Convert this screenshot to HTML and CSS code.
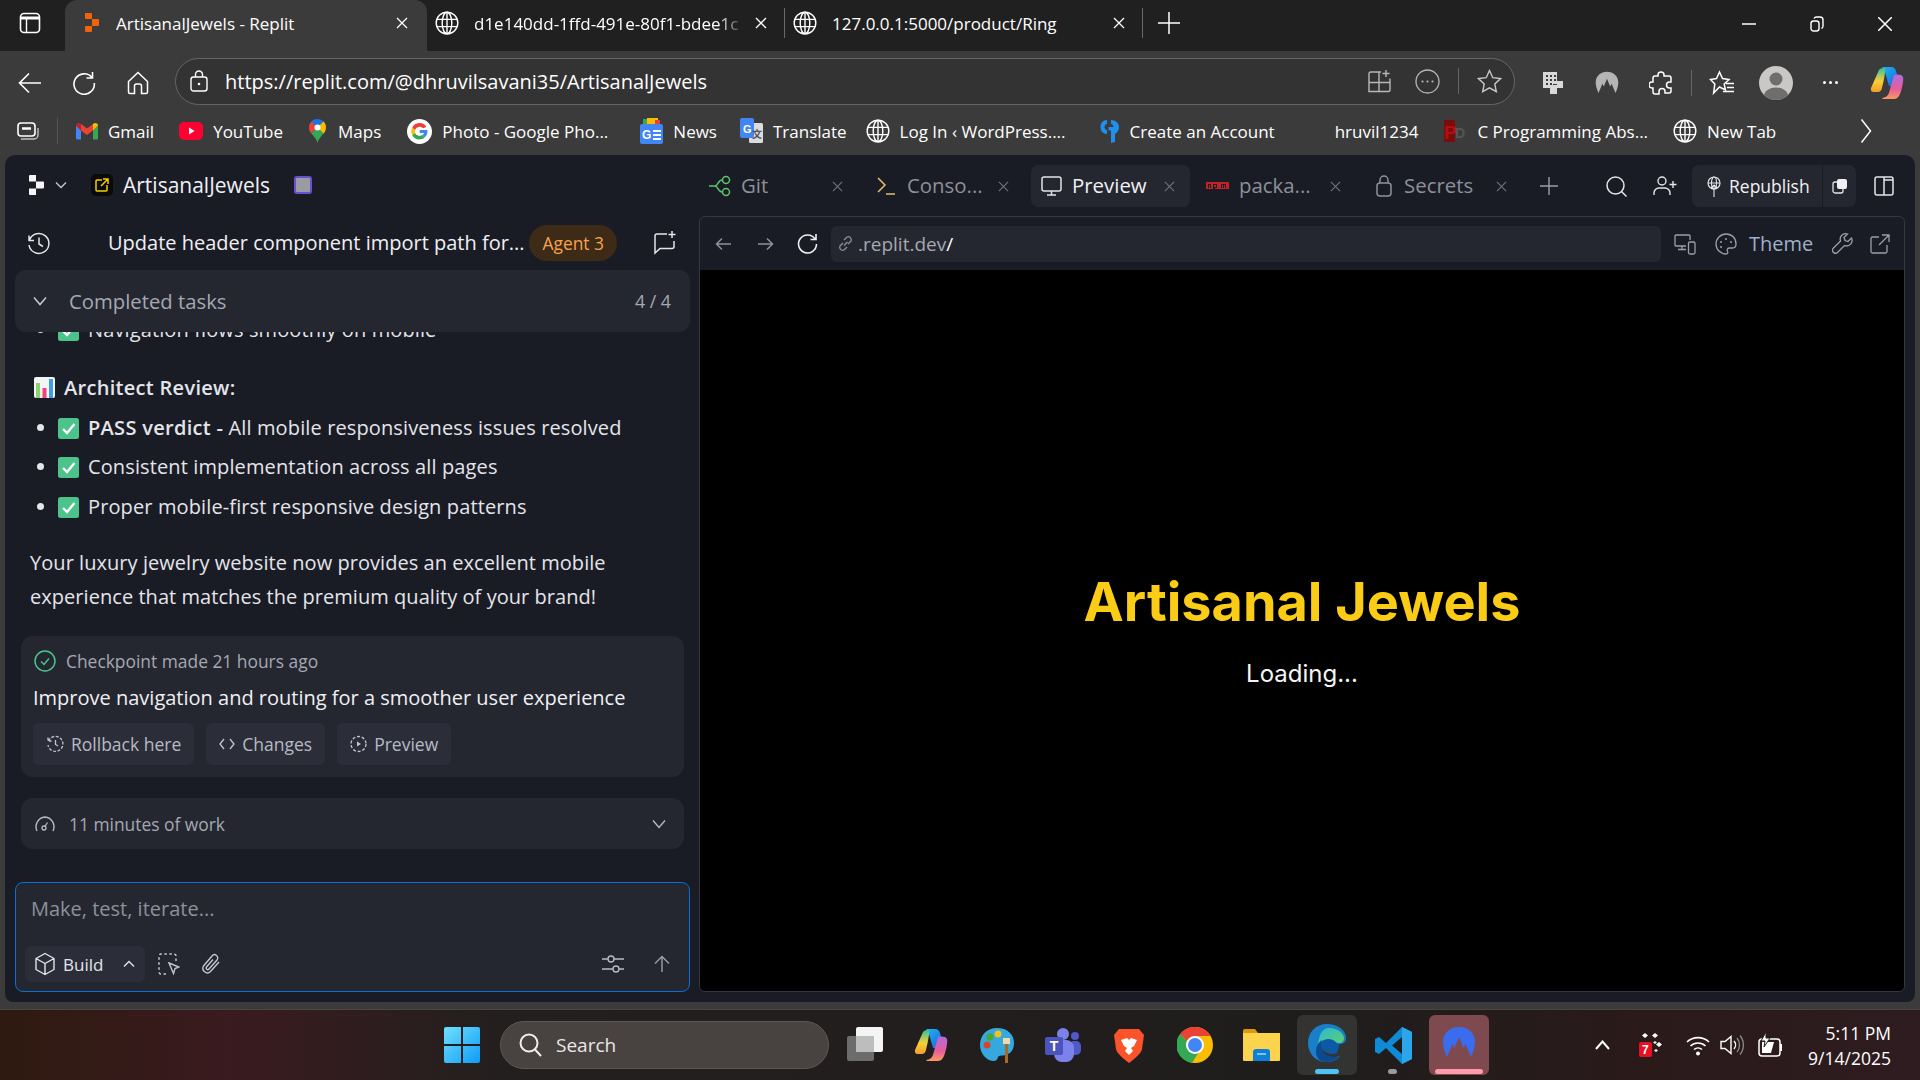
FILE: index.html
```html
<!doctype html>
<html lang="en">
<head>
	<meta charset="UTF-8">
	<title>ArtisanalJewels - Replit</title>
	<link rel="stylesheet" href="styles.css">
</head>
<body>
	<svg class="defs" width="0" height="0">
		<defs>
			<linearGradient id="copilotA" x1="0" y1="0" x2="1" y2="1">
				<stop offset="0" stop-color="#1fb6f5"/><stop offset="1" stop-color="#1a5fd8"/>
			</linearGradient>
			<linearGradient id="copilotB" x1="0" y1="0" x2="0" y2="1">
				<stop offset="0" stop-color="#35c1a0"/><stop offset=".55" stop-color="#f7d038"/><stop offset="1" stop-color="#f59b2b"/>
			</linearGradient>
			<linearGradient id="copilotC" x1="0" y1="0" x2="0" y2="1">
				<stop offset="0" stop-color="#b06be0"/><stop offset=".6" stop-color="#e85d9c"/><stop offset="1" stop-color="#fb9a5d"/>
			</linearGradient>
			<linearGradient id="winBlue" x1="0" y1="0" x2="1" y2="1">
				<stop offset="0" stop-color="#6fe0ff"/><stop offset="1" stop-color="#0f9bf5"/>
			</linearGradient>
			<linearGradient id="edgeSwirl" x1="0" y1="0" x2="1" y2="1">
				<stop offset="0" stop-color="#2bb7d6"/><stop offset="1" stop-color="#5fd36a"/>
			</linearGradient>
			<symbol id="i-globe" viewBox="0 0 24 24"><g fill="none" stroke="currentColor" stroke-width="1.4"><circle cx="12" cy="12" r="10.8"/><ellipse cx="12" cy="12" rx="4.8" ry="10.8"/><path d="M1.6 8.4h20.8M1.6 15.6h20.8M12 1.2v21.6"/></g></symbol>
			<symbol id="i-x" viewBox="0 0 12 12"><path d="M1 1l10 10M11 1L1 11" fill="none" stroke="currentColor" stroke-width="1.3"/></symbol>
			<symbol id="i-check" viewBox="0 0 21 21"><rect x="0" y="0" width="21" height="21" rx="2.5" fill="#4cc38a"/><path d="M5 11l4 4 7.5-9" fill="none" stroke="#fff" stroke-width="2.4"/></symbol>
			<symbol id="i-copilot" viewBox="0 0 34 34">
				<path d="M12 1h9c3 0 4.500 2 5.200 4.500L30 20H19L15 6c-.6-2-1.500-4-3-5z" fill="url(#copilotA)"/>
				<path d="M9 4c1.500-2 5-3 6-1 1 1.500-2 15-3 19-.6 2.500-2 4-4 4H3.500C1.500 26 .5 24.500 1 22z" fill="url(#copilotB)"/>
				<path d="M24 9c3-1 8-1 9 2 1 3-1.500 14-3 17-1 2.500-3 5-5.500 5H13c-1 0-1-1 0-1.200 3-.5 5-2 6-5z" fill="url(#copilotC)"/>
			</symbol>
			<symbol id="i-nord" viewBox="0 0 34 34"><path d="M5 31C2.500 26 1 21 1 16 1 7 8 1 17 1s16 6 16 15c0 5-1.500 10-4 15l-5.500-13-2 4L17 11l-4.500 11-2-4z" fill="currentColor"/></symbol>
		</defs>
	</svg>

	<header class="tabstrip">
		<div class="tabstrip-menu">
			<svg width="22" height="22" viewBox="0 0 22 22"><rect x="1.500" y="1.500" width="19" height="19" rx="3.500" fill="none" stroke="#fff" stroke-width="1.600"/><path d="M1.500 6h19" stroke="#fff" stroke-width="3"/><path d="M7.500 6v14" stroke="#fff" stroke-width="1.400"/></svg>
		</div>
		<div class="btab btab-on">
			<svg class="btab-fav" width="16" height="22" viewBox="0 0 16 22"><path d="M1 1h6a1 1 0 0 1 1 1v5H2a1 1 0 0 1-1-1zM8 7h6a1 1 0 0 1 1 1v5a1 1 0 0 1-1 1H8zM2 14h6v5a1 1 0 0 1-1 1H2a1 1 0 0 1-1-1v-4a1 1 0 0 1 1-1z" fill="#f26207"/></svg>
			<span class="btab-text">ArtisanalJewels - Replit</span>
			<svg class="btab-x" width="12" height="12"><use href="#i-x"/></svg>
		</div>
		<div class="btab">
			<svg class="btab-globe" width="24" height="24"><use href="#i-globe"/></svg>
			<span class="btab-text btab-fade">d1e140dd-1ffd-491e-80f1-bdee1c</span>
			<svg class="btab-x" width="12" height="12"><use href="#i-x"/></svg>
		</div>
		<i class="tab-sep"></i>
		<div class="btab">
			<svg class="btab-globe" width="24" height="24"><use href="#i-globe"/></svg>
			<span class="btab-text">127.0.0.1:5000/product/Ring</span>
			<svg class="btab-x" width="12" height="12"><use href="#i-x"/></svg>
		</div>
		<i class="tab-sep"></i>
		<svg class="tab-plus" width="22" height="22" viewBox="0 0 22 22"><path d="M11 0v22M0 11h22" stroke="#fff" stroke-width="1.500"/></svg>
		<div class="win-btns">
			<svg width="14" height="14" viewBox="0 0 14 14"><path d="M0 7h14" stroke="#fff" stroke-width="1.500"/></svg>
			<svg width="14" height="16" viewBox="0 0 14 16"><rect x="1" y="5" width="8" height="10" rx="2.500" fill="none" stroke="#fff" stroke-width="1.400"/><path d="M4 2.500C4.500 1.500 5.500 1 6.500 1H10c2 0 3 1 3 3v6c0 1-.5 2-1.500 2.500" fill="none" stroke="#fff" stroke-width="1.400"/></svg>
			<svg width="14" height="14" viewBox="0 0 14 14"><path d="M0 0l14 14M14 0L0 14" stroke="#fff" stroke-width="1.500"/></svg>
		</div>
	</header>

	<div class="toolbar">
		<div class="tool tool-first">
			<svg width="24" height="22" viewBox="0 0 24 22"><path d="M23 11H2M11 1.500L1.500 11l9.500 9.500" fill="none" stroke="#fff" stroke-width="1.600"/></svg>
		</div>
		<div class="tool">
			<svg width="24" height="24" viewBox="0 0 24 24"><path d="M20 6.500A10.200 10.200 0 1 0 22.300 12M20.500 1v6h-6" fill="none" stroke="#fff" stroke-width="1.600"/></svg>
		</div>
		<div class="tool">
			<svg width="24" height="24" viewBox="0 0 24 24"><path d="M2.500 10.500L12 1.500l9.500 9V21a1.500 1.500 0 0 1-1.500 1.500h-4.500V15a2 2 0 0 0-2-2h-3a2 2 0 0 0-2 2v7.500H4A1.500 1.500 0 0 1 2.500 21z" fill="none" stroke="#fff" stroke-width="1.500"/></svg>
		</div>
		<div class="addr">
			<svg width="18" height="22" viewBox="0 0 18 22"><rect x="1" y="7" width="16" height="14" rx="2.500" fill="none" stroke="#fff" stroke-width="1.400"/><path d="M5.500 7V4.500a3.500 3.500 0 0 1 7 0V7" fill="none" stroke="#fff" stroke-width="1.400"/><circle cx="9" cy="14" r="1.300" fill="#fff"/></svg>
			<span class="addr-url">https://replit.com/@dhruvilsavani35/ArtisanalJewels</span>
			<div class="addr-right">
				<svg class="addr-split" width="23" height="24" viewBox="0 0 23 24"><path d="M13 3H2.500A1.500 1.500 0 0 0 1 4.500v18h19.500A1.500 1.500 0 0 0 22 21V9.500M1 13.500h21M11 3v19.500M18 1v7M14.500 4.500h7" fill="none" stroke="#b8b8b8" stroke-width="1.400"/></svg>
				<svg width="25" height="25" viewBox="0 0 25 25"><circle cx="12.500" cy="12.500" r="11.500" fill="none" stroke="#b8b8b8" stroke-width="1.300"/><circle cx="7.500" cy="12.500" r="1.100" fill="#b8b8b8"/><circle cx="12.500" cy="12.500" r="1.100" fill="#b8b8b8"/><circle cx="17.500" cy="12.500" r="1.100" fill="#b8b8b8"/></svg>
				<i class="addr-sep"></i>
				<svg width="25" height="25" viewBox="0 0 25 25"><path d="M12.500 1.500l3.300 7.200 7.700.9-5.700 5.300 1.500 7.800-6.800-3.900-6.800 3.900 1.500-7.800L1.500 9.600l7.700-.9z" fill="none" stroke="#c8c8c8" stroke-width="1.400"/></svg>
			</div>
		</div>
		<div class="tool tool-ext">
			<svg width="24" height="24" viewBox="0 0 24 24"><path d="M2 1h14v9h6v7h-6v6H9v-6H2z" fill="#d8d8d8"/><path d="M5 4h2v2H5zM9 4h2v2H9zM13 4h2v2h-2zM5 8h2v2H5zM9 8h2v2H9zM13 8h2v2h-2zM5 12h2v2H5zM9 12h2v2H9z" fill="#3b3b3b"/><path d="M16 13h-4v1h4z" fill="#3b3b3b"/></svg>
		</div>
		<div class="tool">
			<svg width="24" height="24" color="#b5b5b5"><use href="#i-nord"/></svg>
		</div>
		<div class="tool">
			<svg width="24" height="25" viewBox="0 0 24 25"><path d="M9 5a3 3 0 0 1 6 0v1h5a2 2 0 0 1 2 2v4h-1.500a3 3 0 0 0 0 6H22v3a2 2 0 0 1-2 2h-4v-1.500a3 3 0 0 0-6 0V24H6a2 2 0 0 1-2-2v-4H3a3 3 0 0 1 0-6h1V8a2 2 0 0 1 2-2h3z" fill="none" stroke="#fff" stroke-width="1.500"/></svg>
		</div>
		<i class="tool-sep"></i>
		<div class="tool">
			<svg width="26" height="26" viewBox="0 0 26 26"><path d="M10.500 2l3 6.500 6.500 1-4.800 4.500 1.200 6-5.900-3-5.900 6 1.200-9L1.500 9.500l6-1z" fill="none" stroke="#fff" stroke-width="1.500"/><path d="M17 13.500h8M18 17.500h7M14 21.500h11" stroke="#fff" stroke-width="1.500"/></svg>
		</div>
		<div class="tool">
			<div class="avatar">
				<svg width="34" height="34" viewBox="0 0 34 34"><circle cx="17" cy="13" r="6.500" fill="#6e6e6e"/><ellipse cx="17" cy="30" rx="12" ry="8.500" fill="#6e6e6e"/></svg>
			</div>
		</div>
		<div class="tool tool-dots"><b></b><b></b><b></b></div>
		<div class="tool tool-last">
			<svg width="34" height="34"><use href="#i-copilot"/></svg>
		</div>
	</div>

	<nav class="bookmarks">
		<div class="bm-start">
			<svg width="22" height="20" viewBox="0 0 22 20"><rect x="1" y="2" width="17" height="13" rx="3" fill="none" stroke="#fff" stroke-width="1.600"/><path d="M5 7.500h9" stroke="#fff" stroke-width="2.500"/><path d="M4 18h13a4 4 0 0 0 4-4V7" fill="none" stroke="#c0c0c0" stroke-width="1.400"/></svg>
		</div>
		<i class="bm-sep"></i>
		<a class="bm">
			<svg width="22" height="18" viewBox="0 0 22 18"><path d="M0 3.500V16a1.500 1.500 0 0 0 1.500 1.500H5V8.500z" fill="#4285f4"/><path d="M22 3.500V16a1.500 1.500 0 0 1-1.500 1.500H17V8.500z" fill="#34a853"/><path d="M5 8.500L11 13l6-4.500V2l-6 4.500L5 2z" fill="#ea4335"/><path d="M0 3.500C0 1 3 0 5 2v6.500z" fill="#c5221f"/><path d="M22 3.500C22 1 19 0 17 2v6.500z" fill="#fbbc04"/></svg>
			<span>Gmail</span>
		</a>
		<a class="bm">
			<svg width="24" height="22" viewBox="0 0 24 22"><rect y="2" width="24" height="18" rx="5" fill="#ff0033"/><path d="M10 7.500l5.500 3.500-5.500 3.500z" fill="#fff"/></svg>
			<span>YouTube</span>
		</a>
		<a class="bm bm-maps">
			<svg width="17" height="24" viewBox="0 0 17 24"><path d="M8.500 0A8.500 8.500 0 0 0 2.400 14.400L14.600 2.500A8.500 8.500 0 0 0 8.500 0z" fill="#1a73e8"/><path d="M2.400 2.500A8.500 8.500 0 0 0 0 8.500c0 2.300.9 4.300 2.400 5.900l6-6z" fill="#ea4335"/><path d="M14.600 2.500l-12.200 12C5 17.500 7.500 20 8.500 24c1-4 3.500-6.500 6.100-9.500z" fill="#34a853"/><path d="M14.600 2.500L8.500 8.500l6.100 6c1.500-1.600 2.400-3.700 2.400-6s-.9-4.400-2.400-6z" fill="#fbbc04"/><circle cx="8.500" cy="8.500" r="3" fill="#fff"/></svg>
			<span>Maps</span>
		</a>
		<a class="bm bm-photo">
			<svg width="25" height="25" viewBox="0 0 25 25"><circle cx="12.500" cy="12.500" r="12.500" fill="#fff"/><path d="M19.500 8A8 8 0 0 0 5.200 8.800l2.900 2.300A4.700 4.700 0 0 1 16 9.200z" fill="#ea4335"/><path d="M5.200 8.800a8 8 0 0 0 0 7.400l2.900-2.300a4.700 4.700 0 0 1 0-2.800z" fill="#fbbc04"/><path d="M5.200 16.200a8 8 0 0 0 12.700 2l-2.800-2.200a4.700 4.700 0 0 1-7-2.100z" fill="#34a853"/><path d="M20.300 11h-7.600v3.100h4.500a3.800 3.800 0 0 1-2.100 1.900l2.800 2.200c2-1.800 3-4.500 2.400-7.200z" fill="#4285f4"/></svg>
			<span>Photo - Google Pho...</span>
		</a>
		<a class="bm bm-news">
			<svg width="23" height="26" viewBox="0 0 23 26"><path d="M3 1h12v6H3z" fill="#34a853"/><path d="M7 0h11v7H7z" fill="#fbbc04"/><path d="M15 2h5v6h-5z" fill="#ea4335"/><rect y="6" width="23" height="20" rx="2" fill="#4285f4"/><text class="bm-glyph" x="2" y="21" font-size="12">G</text><path d="M13 12h8v2h-8zM13 16h8v2h-8zM13 20h8v2h-8z" fill="#fff"/></svg>
			<span>News</span>
		</a>
		<a class="bm bm-translate">
			<svg width="23" height="26" viewBox="0 0 23 26"><rect x="9" y="5" width="14" height="20" rx="1.500" fill="#dadce0"/><rect width="14" height="20" rx="2" fill="#4285f4"/><text class="bm-glyph" x="3" y="15" font-size="11">G</text><text class="bm-glyph bm-glyph-dark" x="12" y="20" font-size="10">文</text></svg>
			<span>Translate</span>
		</a>
		<a class="bm bm-login">
			<svg width="24" height="24"><use href="#i-globe"/></svg>
			<span>Log In ‹ WordPress....</span>
		</a>
		<a class="bm bm-account">
			<svg width="21" height="26" viewBox="0 0 21 26"><path d="M8 2C4 2 1.500 5 1.500 9s2.500 7 6.500 7V12C6.500 12 5.500 10.500 5.500 9S6.500 6 8 6zM12 2v4c1.500 0 2.500 1.500 2.500 3h-5v3.500H12V25l4-1v-8c2.500-1.500 4-4 4-7 0-4-3.500-7-8-7z" fill="#1e90f0"/></svg>
			<span>Create an Account</span>
		</a>
		<a class="bm bm-plain"><span>hruvil1234</span></a>
		<a class="bm">
			<svg width="24" height="24" viewBox="0 0 24 24"><rect x="1" y="1" width="11" height="22" fill="#7a0c0c"/><rect x="12" y="3" width="11" height="20" fill="#3c3c3c"/><text class="bm-glyph bm-glyph-p" x="1" y="20" font-size="19">P</text><text class="bm-glyph bm-glyph-d" x="12" y="19" font-size="14">D</text></svg>
			<span>C Programming Abs...</span>
		</a>
		<a class="bm">
			<svg width="24" height="24"><use href="#i-globe"/></svg>
			<span>New Tab</span>
		</a>
		<svg class="bm-more" width="12" height="26" viewBox="0 0 12 26"><path d="M1.500 1.500L10.500 13 1.500 24.500" fill="none" stroke="#fff" stroke-width="1.500"/></svg>
	</nav>

	<main class="app">
		<section class="side">
			<div class="side-head">
				<svg class="replit-logo" width="15" height="20" viewBox="0 0 15 20"><path d="M0 1a1 1 0 0 1 1-1h6v6.500H0zM7 6.500h7a1 1 0 0 1 1 1v5a1 1 0 0 1-1 1H7zM0 13.500h7V20H1a1 1 0 0 1-1-1z" fill="#f5f5f5"/></svg>
				<svg class="head-chev" width="12" height="8" viewBox="0 0 12 8"><path d="M1 1.500l5 5 5-5" fill="none" stroke="#c8cad0" stroke-width="1.300"/></svg>
				<div class="proj-tile">
					<svg width="14" height="14" viewBox="0 0 14 14"><path d="M7 2H2a1 1 0 0 0-1 1v9a1 1 0 0 0 1 1h9a1 1 0 0 0 1-1V7M8 1h5v5M13 1L6 8" fill="none" stroke="#f5d000" stroke-width="1.500"/></svg>
				</div>
				<span class="proj-name">ArtisanalJewels</span>
				<div class="proj-chip"><i></i></div>
			</div>
			<div class="side-title">
				<svg width="24" height="24" viewBox="0 0 24 24"><path d="M3 4.500v5h5M3.500 9a10 10 0 1 1-.5 5" fill="none" stroke="#e4e5ea" stroke-width="1.500"/><path d="M13 6.500V13l4 2.500" fill="none" stroke="#e4e5ea" stroke-width="1.500"/></svg>
				<span class="title-text">Update header component import path for...</span>
				<span class="agent-badge">Agent 3</span>
				<svg class="title-new" width="22" height="24" viewBox="0 0 22 24"><path d="M13 3H3a2 2 0 0 0-2 2v17l5-4.500h12a2 2 0 0 0 2-2V10" fill="none" stroke="#e4e5ea" stroke-width="1.500"/><path d="M18 0v7M14.500 3.500h7" stroke="#e4e5ea" stroke-width="1.500"/></svg>
			</div>
			<div class="tasks-bar">
				<svg width="16" height="10" viewBox="0 0 16 10"><path d="M2 1.500l6 7 6-7" fill="none" stroke="#c8cad0" stroke-width="1.500"/></svg>
				<span class="tasks-label">Completed tasks</span>
				<span class="tasks-count">4 / 4</span>
			</div>
			<div class="chat">
				<ul class="chat-list chat-list-top">
					<li><svg width="21" height="21"><use href="#i-check"/></svg><span>Navigation flows smoothly on mobile</span></li>
				</ul>
				<p class="chat-head">
					<svg width="21" height="21" viewBox="0 0 21 21"><rect width="21" height="21" rx="2" fill="#f4f4f6"/><rect x="2" y="6" width="4" height="15" fill="#8bd36a"/><rect x="8.500" y="11" width="4" height="10" fill="#f0447c"/><rect x="15" y="2" width="4" height="19" fill="#3f9de8"/></svg>
					<b>Architect Review:</b>
				</p>
				<ul class="chat-list">
					<li><svg width="21" height="21"><use href="#i-check"/></svg><span><b>PASS verdict -</b> All mobile responsiveness issues resolved</span></li>
					<li><svg width="21" height="21"><use href="#i-check"/></svg><span>Consistent implementation across all pages</span></li>
					<li><svg width="21" height="21"><use href="#i-check"/></svg><span>Proper mobile-first responsive design patterns</span></li>
				</ul>
				<p class="chat-para">Your luxury jewelry website now provides an excellent mobile experience that matches the premium quality of your brand!</p>
				<div class="card checkpoint">
					<div class="cp-top">
						<svg width="22" height="22" viewBox="0 0 22 22"><circle cx="11" cy="11" r="10" fill="none" stroke="#4cc38a" stroke-width="1.500"/><path d="M7 11.500l3 3 5-6" fill="none" stroke="#4cc38a" stroke-width="1.500"/></svg>
						<span>Checkpoint made 21 hours ago</span>
					</div>
					<div class="cp-msg">Improve navigation and routing for a smoother user experience</div>
					<div class="cp-btns">
						<a class="cp-btn">
							<svg width="18" height="18" viewBox="0 0 18 18"><path d="M2 2.500V6h3.500M2.500 6A7.500 7.500 0 1 1 2 10" fill="none" stroke="#c4c6ce" stroke-width="1.300" stroke-dasharray="3 1.500"/><path d="M9.500 5v4.500l2.500 1.500" fill="none" stroke="#c4c6ce" stroke-width="1.300"/></svg>
							<span>Rollback here</span>
						</a>
						<a class="cp-btn">
							<svg width="16" height="14" viewBox="0 0 16 14"><path d="M5 2L1 7l4 5M11 2l4 5-4 5" fill="none" stroke="#c4c6ce" stroke-width="1.300"/></svg>
							<span>Changes</span>
						</a>
						<a class="cp-btn">
							<svg width="17" height="18" viewBox="0 0 17 18"><circle cx="8.500" cy="9" r="7.500" fill="none" stroke="#c4c6ce" stroke-width="1.300" stroke-dasharray="3 1.800"/><path d="M7 6.500l4 2.500-4 2.500z" fill="#c4c6ce"/></svg>
							<span>Preview</span>
						</a>
					</div>
				</div>
				<div class="card work">
					<svg width="22" height="18" viewBox="0 0 22 18"><path d="M3 16A9.800 9.800 0 0 1 11 2a9.800 9.800 0 0 1 8 14" fill="none" stroke="#b8bac3" stroke-width="1.400"/><circle cx="10" cy="13" r="2" fill="none" stroke="#b8bac3" stroke-width="1.300"/><path d="M11 11.500l2.500-4" stroke="#b8bac3" stroke-width="1.300"/></svg>
					<span>11 minutes of work</span>
					<svg class="work-chev" width="16" height="10" viewBox="0 0 16 10"><path d="M2 1.500l6 7 6-7" fill="none" stroke="#b8bac3" stroke-width="1.400"/></svg>
				</div>
			</div>
			<div class="composer">
				<div class="composer-ph">Make, test, iterate...</div>
				<div class="composer-row">
					<a class="build-btn">
						<svg width="22" height="24" viewBox="0 0 22 24"><path d="M11 1.500l9 5v11l-9 5-9-5v-11zM2 6.500l9 5 9-5M11 11.500v11" fill="none" stroke="#e4e5ea" stroke-width="1.400" stroke-linejoin="round"/></svg>
						<span>Build</span>
						<svg class="build-chev" width="12" height="8" viewBox="0 0 12 8"><path d="M1 6.500l5-5 5 5" fill="none" stroke="#e4e5ea" stroke-width="1.300"/></svg>
					</a>
					<svg class="comp-ico" width="22" height="22" viewBox="0 0 22 22"><path d="M8 21H3a2 2 0 0 1-2-2V3a2 2 0 0 1 2-2h13a2 2 0 0 1 2 2v6" fill="none" stroke="#c4c6ce" stroke-width="1.500" stroke-dasharray="2.500 2.500"/><path d="M11 10l10 4-4 1.500-1.500 5z" fill="none" stroke="#c4c6ce" stroke-width="1.400"/></svg>
					<svg class="comp-ico" width="22" height="24" viewBox="0 0 22 24"><path d="M19 10l-8.500 9.500a4.500 4.500 0 0 1-7-5.500L12 4a3.200 3.200 0 0 1 5 4l-8 9a1.500 1.500 0 0 1-2.500-2l6.500-7.500" fill="none" stroke="#c4c6ce" stroke-width="1.400"/></svg>
					<svg class="comp-ico comp-right" width="22" height="18" viewBox="0 0 22 18"><path d="M0 4h6M12 4h10M0 14h11M17 14h5" stroke="#b8bac3" stroke-width="1.400"/><circle cx="9" cy="4" r="3" fill="none" stroke="#b8bac3" stroke-width="1.400"/><circle cx="14" cy="14" r="3" fill="none" stroke="#b8bac3" stroke-width="1.400"/></svg>
					<svg class="comp-ico comp-send" width="16" height="18" viewBox="0 0 16 18"><path d="M8 17V1.500M1 8.500l7-7 7 7" fill="none" stroke="#9c9ea8" stroke-width="1.400"/></svg>
				</div>
			</div>
		</section>

		<section class="work-area">
			<div class="wtabs">
				<div class="wtab wtab-git">
					<svg width="22" height="22" viewBox="0 0 22 22"><path d="M0 11h6M6 11c3 0 3-6 7-6M6 11c3 0 3 6 7 6" fill="none" stroke="#5ec26a" stroke-width="1.500"/><circle cx="17" cy="5" r="3.500" fill="none" stroke="#5ec26a" stroke-width="1.500"/><circle cx="17" cy="17" r="3.500" fill="none" stroke="#5ec26a" stroke-width="1.500"/></svg>
					<span>Git</span>
					<svg class="wtab-x" width="11" height="11"><use href="#i-x"/></svg>
				</div>
				<div class="wtab wtab-console">
					<svg width="18" height="20" viewBox="0 0 18 20"><path d="M1 2l7 7-7 7" fill="none" stroke="#e0c16a" stroke-width="1.500"/><path d="M9 18h9" stroke="#e0c16a" stroke-width="1.500"/></svg>
					<span>Conso...</span>
					<svg class="wtab-x" width="11" height="11"><use href="#i-x"/></svg>
				</div>
				<div class="wtab wtab-on">
					<svg width="21" height="20" viewBox="0 0 21 20"><rect x="1" y="1" width="19" height="14" rx="2" fill="none" stroke="#e4e5ea" stroke-width="1.500"/><path d="M10.500 15v4M6 19h9" stroke="#e4e5ea" stroke-width="1.500"/></svg>
					<span>Preview</span>
					<svg class="wtab-x" width="11" height="11"><use href="#i-x"/></svg>
				</div>
				<div class="wtab wtab-npm">
					<svg width="23" height="9" viewBox="0 0 23 9"><rect width="23" height="7" fill="#c12127"/><path d="M2 2h3v4H4V3H3v3H2zM7 2h4v4H9v1H7zM8 3v2h2V3zM12 2h8v4h-1V3h-1v3h-1V3h-1v3h-1V2z" fill="#1a1c25"/></svg>
					<span>packa...</span>
					<svg class="wtab-x" width="11" height="11"><use href="#i-x"/></svg>
				</div>
				<div class="wtab wtab-secrets">
					<svg width="16" height="22" viewBox="0 0 16 22"><rect x="1" y="8" width="14" height="13" rx="3" fill="none" stroke="#8e909a" stroke-width="1.500"/><path d="M4 8V5a4 4 0 0 1 8 0v3" fill="none" stroke="#8e909a" stroke-width="1.500"/></svg>
					<span>Secrets</span>
					<svg class="wtab-x" width="11" height="11"><use href="#i-x"/></svg>
				</div>
				<svg class="wtab-plus" width="18" height="18" viewBox="0 0 18 18"><path d="M9 0v18M0 9h18" stroke="#9c9ea8" stroke-width="1.400"/></svg>
				<div class="wtabs-right">
					<svg width="21" height="21" viewBox="0 0 21 21"><circle cx="9.500" cy="9.500" r="8.500" fill="none" stroke="#e4e5ea" stroke-width="1.500"/><path d="M15.500 15.500l5 5" stroke="#e4e5ea" stroke-width="1.500"/></svg>
					<svg class="invite-ico" width="24" height="20" viewBox="0 0 24 20"><circle cx="9" cy="5" r="4" fill="none" stroke="#e4e5ea" stroke-width="1.400"/><path d="M1 19v-2a5 5 0 0 1 5-5h6a5 5 0 0 1 5 5v2" fill="none" stroke="#e4e5ea" stroke-width="1.400"/><path d="M20 5v7M16.500 8.500h7" stroke="#e4e5ea" stroke-width="1.400"/></svg>
					<div class="publish">
						<a class="publish-main">
							<svg width="14" height="21" viewBox="0 0 14 21"><circle cx="7" cy="7" r="6" fill="none" stroke="#e4e5ea" stroke-width="1.200"/><ellipse cx="7" cy="7" rx="2.500" ry="6" fill="none" stroke="#e4e5ea" stroke-width="1.100"/><path d="M1 7h12M7 9v12M4 12l3-3 3 3" fill="none" stroke="#e4e5ea" stroke-width="1.100"/></svg>
							<span>Republish</span>
						</a>
						<a class="publish-side">
							<svg width="15" height="15" viewBox="0 0 15 15"><rect x="1" y="3" width="10" height="11" rx="2" fill="none" stroke="#e4e5ea" stroke-width="1.300"/><rect x="5" y="0" width="10" height="10" rx="2" fill="#f0f0f4"/></svg>
						</a>
					</div>
					<svg class="panel-ico" width="20" height="20" viewBox="0 0 20 20"><rect x="1" y="1" width="18" height="18" rx="2" fill="none" stroke="#e4e5ea" stroke-width="1.500"/><path d="M10 1v18M10 4h9" stroke="#e4e5ea" stroke-width="1.500"/></svg>
				</div>
			</div>
			<div class="pane">
				<div class="pane-bar">
					<svg class="pane-nav" width="17" height="14" viewBox="0 0 17 14"><path d="M16 7H1.500M7 1.500L1.500 7 7 12.500" fill="none" stroke="#8e909a" stroke-width="1.500"/></svg>
					<svg class="pane-nav pane-fwd" width="17" height="14" viewBox="0 0 17 14"><path d="M1 7h14.500M10 1.500L15.500 7 10 12.500" fill="none" stroke="#8e909a" stroke-width="1.500"/></svg>
					<svg class="pane-nav pane-reload" width="22" height="22" viewBox="0 0 22 22"><path d="M19 6a9 9 0 1 0 1.500 5M20 1v5.500h-5.500" fill="none" stroke="#f0f0f4" stroke-width="1.600"/></svg>
					<div class="pane-url">
						<svg width="17" height="17" viewBox="0 0 17 17"><path d="M7 10.500l3.500-3.500M6 8l-3 3a3 3 0 0 0 4 4l3-3M11 9l3-3a3 3 0 0 0-4-4L7 5" fill="none" stroke="#8e909a" stroke-width="1.300"/></svg>
						<span class="pane-host">.replit.dev<em>/</em></span>
					</div>
					<svg class="pane-ico pane-devices" width="22" height="22" viewBox="0 0 22 22"><path d="M12 13H2a1 1 0 0 1-1-1V3a1 1 0 0 1 1-1h13a1 1 0 0 1 1 1v4M8 13v3M4 16.500h8" fill="none" stroke="#9c9ea8" stroke-width="1.300"/><rect x="14.500" y="9" width="6.500" height="12" rx="1.500" fill="none" stroke="#9c9ea8" stroke-width="1.300"/></svg>
					<svg class="pane-ico" width="22" height="22" viewBox="0 0 22 22"><path d="M11 1a10 10 0 1 0 0 20c2 0 2-1.500 1.500-2.500-1-2 0-3.500 2-3.500h3c2 0 3.500-1.500 3.500-4C21 5 17 1 11 1z" fill="none" stroke="#9c9ea8" stroke-width="1.300"/><circle cx="6" cy="9" r="1" fill="#9c9ea8"/><circle cx="11" cy="6" r="1" fill="#9c9ea8"/><circle cx="16" cy="9" r="1" fill="#9c9ea8"/><circle cx="6" cy="14" r="1" fill="#9c9ea8"/></svg>
					<span class="pane-theme">Theme</span>
					<svg class="pane-ico" width="21" height="21" viewBox="0 0 21 21"><path d="M19.500 5l-3.500 3.500-3-1-1-3L15.500 1a5.500 5.500 0 0 0-7 7L1.500 15a3 3 0 0 0 4 4.500l7-7a5.500 5.500 0 0 0 7-7.500z" fill="none" stroke="#9c9ea8" stroke-width="1.300"/></svg>
					<svg class="pane-ico pane-open" width="20" height="20" viewBox="0 0 20 20"><path d="M9 3H2.500A1.500 1.500 0 0 0 1 4.500v13A1.500 1.500 0 0 0 2.500 19h13a1.500 1.500 0 0 0 1.500-1.500V11M12 1h7v7M19 1L9 11" fill="none" stroke="#9c9ea8" stroke-width="1.300"/></svg>
				</div>
				<div class="preview">
					<h1>Artisanal Jewels</h1>
					<p>Loading...</p>
				</div>
			</div>
		</section>
	</main>
	<div class="app-foot"></div>

	<footer class="taskbar">
		<svg class="tb-win" width="36" height="36" viewBox="0 0 36 36"><path d="M0 2a2 2 0 0 1 2-2h15v17H0zM19 0h15a2 2 0 0 1 2 2v15H19zM0 19h17v17H2a2 2 0 0 1-2-2zM19 19h17v15a2 2 0 0 1-2 2H19z" fill="url(#winBlue)"/></svg>
		<div class="tb-search">
			<svg width="23" height="24" viewBox="0 0 23 24"><circle cx="10" cy="10" r="8.500" fill="none" stroke="#eee" stroke-width="2"/><path d="M16 16.500l6 6.500" stroke="#eee" stroke-width="2"/></svg>
			<span>Search</span>
		</div>
		<div class="tb-apps">
			<div class="tb-app">
				<svg width="36" height="36" viewBox="0 0 36 36"><rect x="0" y="9" width="27" height="25" rx="2" fill="#6c6c6c"/><rect x="9" y="0" width="27" height="25" rx="2" fill="#f4f4f4"/><rect x="9" y="9" width="18" height="16" fill="#bdbdbd"/></svg>
			</div>
			<div class="tb-app">
				<svg width="34" height="34"><use href="#i-copilot"/></svg>
			</div>
			<div class="tb-app">
				<svg width="34" height="36" viewBox="0 0 34 36"><path d="M17 1C7 1 0 8 0 18c0 8 6 16 14 16 4 0 3-4 5-5 3-1 6 0 9-2 4-2 6-6 6-11C34 7 27 1 17 1z" fill="#35a8e0"/><circle cx="7" cy="18" r="3.500" fill="#d8442a"/><circle cx="10" cy="10" r="3.500" fill="#4ba82e"/><circle cx="18" cy="7" r="3.500" fill="#f2c21a"/><rect x="23" y="11" width="7" height="6" fill="#efd9b0"/><rect x="25" y="17" width="3" height="19" fill="#a56a2a"/></svg>
			</div>
			<div class="tb-app">
				<svg width="36" height="36" viewBox="0 0 36 36"><circle cx="18" cy="7" r="6" fill="#7b83eb"/><circle cx="30" cy="9" r="4" fill="#5059c9"/><rect x="24" y="14" width="12" height="14" rx="5" fill="#5059c9"/><rect x="9" y="13" width="20" height="22" rx="8" fill="#7b83eb"/><rect y="10" width="18" height="18" rx="2" fill="#4b53bc"/><text class="tb-t" x="9" y="24" font-size="14">T</text></svg>
			</div>
			<div class="tb-app">
				<svg width="32" height="36" viewBox="0 0 32 36"><path d="M6 2h20l5 6-2 14c-1 5-9 11-13 14C12 33 4 27 3 22L1 8z" fill="#fb542b"/><path d="M8 13l6-2 2 2 2-2 6 2-3 6-3 2 2 3-4 4-4-4 2-3-3-2z" fill="#fff"/></svg>
			</div>
			<div class="tb-app">
				<svg width="36" height="36" viewBox="0 0 36 36"><circle cx="18" cy="18" r="18" fill="#fbbc04"/><path d="M18 0a18 18 0 0 1 15.600 9H18a9 9 0 0 0-8 5L3 7a18 18 0 0 1 15-7z" fill="#ea4335"/><path d="M3 7a18 18 0 0 0 12 28.800L22 25a9 9 0 0 1-12-11z" fill="#34a853"/><circle cx="18" cy="18" r="9" fill="#fff"/><circle cx="18" cy="18" r="7" fill="#4285f4"/></svg>
			</div>
			<div class="tb-app">
				<svg width="37" height="32" viewBox="0 0 37 32"><path d="M0 2a2 2 0 0 1 2-2h10l3 4h-15z" fill="#d99a0f"/><path d="M0 4h37v27a1 1 0 0 1-1 1H1a1 1 0 0 1-1-1z" fill="#fbd34d"/><path d="M10 32v-9a3 3 0 0 1 3-3h11a3 3 0 0 1 3 3v9z" fill="#0f80d8"/><path d="M14 24h9v2h-9z" fill="#7cc3f2"/></svg>
			</div>
			<div class="tb-app tb-slot tb-slot-edge">
				<svg width="38" height="38" viewBox="0 0 38 38"><path d="M13 22c0-4 3-8 8-8 5 0 7 3 11 4-1 4-2 9-3 11-5 3-16-1-16-7z" fill="#0c5aa6"/><path d="M19 0C8 0 0 8 0 19c0 11 8 19 18 19 6 0 11-2 14-6-8 3-19 0-19-10 0-4 3-7 8-7 6 0 6 5 11 5 4 0 6-3 6-6C38 6 29 0 19 0z" fill="#1a7fc9"/><path d="M21 4c9 0 15 6 15 10 0 3-2 5-5 5-4 0-4-4-10-4-5 0-9 2-11 6C11 11 14 4 21 4z" fill="url(#edgeSwirl)"/><path d="M13 22c0 8 9 13 19 10-4 4-9 6-14 6-6 0-10-4-10-10 0-6 3-10 6-12-1 2-1 4-1 6z" fill="#0b4a8f"/></svg>
				<i class="tb-mark tb-mark-edge"></i>
			</div>
			<div class="tb-app tb-code">
				<svg width="37" height="37" viewBox="0 0 37 37"><path d="M27 0l10 5v27l-10 5L11 21l-7 6-4-2V12l4-2 7 6zM27 10l-10 8.500 10 8.500z" fill="#0f8ad6"/><path d="M27 0l10 5v27l-10 5z" fill="#2ba6ea"/></svg>
				<i class="tb-dot"></i>
			</div>
			<div class="tb-app tb-slot tb-slot-nord">
				<svg width="34" height="34" color="#3a6cf0"><use href="#i-nord"/></svg>
				<i class="tb-mark tb-mark-nord"></i>
			</div>
		</div>
		<div class="tray">
			<svg class="tray-caret" width="15" height="10" viewBox="0 0 15 10"><path d="M1 9l6.500-7.500L14 9" fill="none" stroke="#fff" stroke-width="2"/></svg>
			<svg class="tray-badge" width="24" height="24" viewBox="0 0 24 24"><path d="M6 0l3 2.500L6 5 3 2.500zM16 0l3 2.500L16 5l-3-2.500zM20 9l3 2.500L20 14l-3-2.500z" fill="#fff"/><path d="M16 8l2 1.500L16 11l-2-1.500zM17 16l2 1.500L17 19l-2-1.500z" fill="#eee"/><rect y="9" width="13" height="15" rx="2" fill="#e81123"/><text class="tray-seven" x="3" y="21" font-size="12">7</text></svg>
			<svg class="tray-wifi" width="24" height="22" viewBox="0 0 24 22"><path d="M1 8a16 16 0 0 1 22 0M4.500 12a11 11 0 0 1 15 0M8 15.500a6 6 0 0 1 8 0" fill="none" stroke="#fff" stroke-width="1.600"/><circle cx="12" cy="19.500" r="2" fill="#fff"/></svg>
			<svg class="tray-vol" width="25" height="22" viewBox="0 0 25 22"><path d="M1 7.500h4l6-5v17l-6-5H1z" fill="none" stroke="#fff" stroke-width="1.400"/><path d="M14 7a6 6 0 0 1 0 8" fill="none" stroke="#fff" stroke-width="1.400"/><path d="M17 4a11 11 0 0 1 0 14M20 1.500a15 15 0 0 1 0 19" fill="none" stroke="#8a8a8a" stroke-width="1.300"/></svg>
			<svg class="tray-bat" width="25" height="26" viewBox="0 0 25 26"><rect x="1" y="7" width="21" height="17" rx="3" fill="none" stroke="#fff" stroke-width="1.500"/><path d="M23 12v7" stroke="#fff" stroke-width="2"/><path d="M4 10h12l-3 11H4z" fill="#fff"/><path d="M8 0L3 9h4l-1 6 6-9H8z" fill="#fff" stroke="#231f1e"/></svg>
			<div class="clock"><span>5:11 PM</span><span>9/14/2025</span></div>
		</div>
	</footer>
</body>
</html>
```
FILE: styles.css
```css
* {
	margin: 0;
	padding: 0;
	box-sizing: border-box;
}

html, body {
	width: 1920px;
	height: 1080px;
	overflow: hidden;
}

body {
	display: flex;
	flex-direction: column;
	background: #3b3b3b;
	color: #fff;
	font-family: "Open Sans", "Noto Sans", sans-serif;
}

.defs {
	display: block;
	flex: none;
}

svg {
	flex: none;
	display: block;
}

/* browser tabs */
.tabstrip {
	display: flex;
	align-items: center;
	height: 51px;
	background: #202020;
	font-size: 17px;
}

.tabstrip-menu {
	display: flex;
	justify-content: center;
	width: 65px;
	padding: 0 5px 5px 0;
}

.btab {
	display: flex;
	align-items: center;
	width: 357px;
	height: 51px;
	padding: 0 17px 5px 8px;
}

.btab-on {
	width: 362px;
	padding: 0 19px 5px;
	background: #3b3b3b;
	border-radius: 12px 12px 0 0;
}

.btab-fav {
	margin-right: 16px;
}

.btab-globe {
	margin-right: 15px;
}

.btab-text {
	flex: 1;
	white-space: nowrap;
	overflow: hidden;
}

.btab-fade {
	margin-right: 10px;
	-webkit-mask-image: linear-gradient(90deg, #000 90%, transparent);
	mask-image: linear-gradient(90deg, #000 90%, transparent);
}

.tab-sep {
	width: 1px;
	height: 30px;
	margin-bottom: 5px;
	background: #6a6a6a;
}

.tab-plus {
	margin-left: 15px;
	margin-bottom: 5px;
}

.win-btns {
	display: flex;
	align-items: center;
	gap: 54px;
	margin-left: auto;
	padding-right: 28px;
	padding-bottom: 3px;
}

/* address row */
.toolbar {
	display: flex;
	align-items: center;
	height: 63px;
	padding-left: 3px;
}

.tool {
	display: flex;
	align-items: center;
	justify-content: center;
	width: 54px;
}

.addr {
	display: flex;
	align-items: center;
	width: 1340px;
	height: 47px;
	margin-left: 10px;
	margin-bottom: 3px;
	padding: 0 12px 0 14px;
	background: #333;
	border: 1.500px solid #666;
	border-radius: 24px;
}

.addr-url {
	margin-left: 17px;
	font-size: 20px;
}

.addr-right {
	display: flex;
	align-items: center;
	gap: 18px;
	margin-left: auto;
}

.addr-split {
	margin-right: 6px;
}

.addr-sep {
	width: 1px;
	height: 26px;
	background: #666;
}

.tool-ext {
	margin-left: 11px;
}

.tool-sep {
	width: 1px;
	height: 26px;
	margin: 0 3px;
	background: #666;
}

.avatar {
	width: 34px;
	height: 34px;
	border-radius: 50%;
	background: #c9c8c4;
	overflow: hidden;
}

.tool-dots {
	gap: 3px;
}

.tool-dots b {
	width: 3px;
	height: 3px;
	border-radius: 50%;
	background: #fff;
}

.tool-last {
	margin-left: 3px;
}

/* bookmarks */
.bookmarks {
	display: flex;
	align-items: center;
	gap: 25px;
	height: 41px;
	padding-left: 17px;
	padding-bottom: 7px;
	font-size: 17px;
}

.bm-start {
	margin-right: -7px;
}

.bm-sep {
	width: 1px;
	height: 26px;
	margin-right: -7px;
	background: #555;
}

.bm {
	display: flex;
	align-items: center;
	gap: 10px;
	white-space: nowrap;
}

.bm-maps {
	margin-left: 1px;
}

.bm-maps span {
	margin-left: 2px;
}

.bm-photo {
	margin-left: 1px;
}

.bm-news {
	margin-left: 7px;
}

.bm-translate {
	margin-left: -2px;
}

.bm-login {
	margin-left: -6px;
}

.bm-account {
	margin-left: 8px;
}

.bm-plain {
	margin-left: 35px;
}

.bm-more {
	margin-left: auto;
	margin-right: 48px;
}

.bm-glyph {
	fill: #fff;
	font-family: "Liberation Sans", sans-serif;
	font-weight: 700;
}

.bm-glyph-dark {
	fill: #555;
	font-family: "Noto Sans CJK SC", sans-serif;
}

.bm-glyph-p {
	fill: #b01010;
}

.bm-glyph-d {
	fill: #555;
}

/* replit */
.app {
	display: flex;
	flex: none;
	height: 847px;
	margin: 0 5px;
	background: #1a1c25;
	border-radius: 10px 10px 8px 8px;
	overflow: hidden;
}

.app-foot {
	height: 7px;
}

.side {
	display: flex;
	flex-direction: column;
	flex: none;
	width: 695px;
	padding-right: 10px;
}

.side-head {
	display: flex;
	align-items: center;
	height: 60px;
	padding-left: 24px;
}

.replit-logo {
	margin-right: 11px;
}

.head-chev {
	margin-right: 24px;
}

.proj-tile {
	display: flex;
	align-items: center;
	justify-content: center;
	width: 22px;
	height: 22px;
	margin-right: 10px;
	background: #0a0a0a;
	border-radius: 5px;
}

.proj-name {
	font-size: 21px;
	color: #f0f0f4;
}

.proj-chip {
	width: 18px;
	height: 18px;
	margin-left: 24px;
	padding: 2px;
	background: #6a4fd0;
	border-radius: 3px;
}

.proj-chip i {
	display: block;
	width: 14px;
	height: 14px;
	background: #9a9ca4;
	border-radius: 1px;
}

.side-title {
	display: flex;
	align-items: center;
	height: 55px;
	padding-left: 21px;
}

.title-text {
	margin-left: 58px;
	font-size: 20px;
	color: #f0f0f4;
	white-space: nowrap;
}

.agent-badge {
	display: flex;
	align-items: center;
	height: 36px;
	margin-left: auto;
	padding: 0 13px;
	background: #3d2a17;
	border-radius: 18px;
	font-size: 17.400px;
	color: #f7a24b;
}

.title-new {
	margin-left: 37px;
	margin-right: 14px;
}

.tasks-bar {
	display: flex;
	flex: none;
	align-items: center;
	height: 62px;
	margin-left: 10px;
	padding: 0 19px 0 17px;
	background: #242730;
	border-radius: 11px;
	font-size: 20.300px;
}

.tasks-label {
	margin-left: 21px;
	color: #a6a8b2;
}

.tasks-count {
	margin-left: auto;
	font-size: 17.800px;
	color: #a6a8b2;
}

.chat {
	flex: 1;
	min-height: 0;
	overflow: hidden;
	padding-left: 10px;
	font-size: 20px;
	color: #e4e5ea;
}

.chat-list {
	list-style: disc;
	padding-left: 43px;
	letter-spacing: .12px;
}

.chat-list-top {
	margin-top: -22px;
}

.chat-list li {
	height: 39.500px;
	line-height: 39.500px;
}

.chat-list li svg {
	display: inline-block;
	vertical-align: -4px;
	margin-right: 9px;
}

.chat-list b, .chat-head b {
	font-weight: 600;
	letter-spacing: .3px;
}

.chat-head {
	display: flex;
	align-items: center;
	gap: 9px;
	height: 34px;
	margin-top: 21px;
	margin-left: 19px;
	margin-bottom: 3px;
}

.chat-para {
	width: 640px;
	margin-top: 20px;
	margin-left: 15px;
	line-height: 34px;
	letter-spacing: .05px;
}

.card {
	background: #242730;
	border-radius: 12px;
	width: 663px;
	margin-left: 6px;
}

.checkpoint {
	height: 141px;
	margin-top: 22px;
	padding: 13px 12px 0;
}

.cp-top {
	display: flex;
	align-items: center;
	gap: 10px;
	height: 24px;
	padding-left: 1px;
	font-size: 17.400px;
	color: #a6a8b2;
}

.cp-msg {
	margin-top: 10px;
	line-height: 30px;
	color: #f0f0f4;
}

.cp-btns {
	display: flex;
	gap: 12px;
	margin-top: 10px;
}

.cp-btn {
	display: flex;
	align-items: center;
	gap: 7px;
	height: 42px;
	padding: 0 13px;
	background: #2b2e39;
	border-radius: 6px;
	font-size: 17.500px;
	color: #b8bac3;
}

.work {
	display: flex;
	align-items: center;
	gap: 13px;
	height: 51px;
	margin-top: 21px;
	padding: 0 17px 0 13px;
	font-size: 17.400px;
	color: #a6a8b2;
}

.work-chev {
	margin-left: auto;
}

.composer {
	flex: none;
	height: 110px;
	margin: 7px 0 10px 10px;
	padding: 13px 9px 0;
	background: #242730;
	border: 1.500px solid #0a6fd8;
	border-radius: 8px;
}

.composer-ph {
	padding-left: 6px;
	font-size: 20px;
	line-height: 26px;
	color: #8e909a;
}

.composer-row {
	display: flex;
	align-items: center;
	height: 36px;
	margin-top: 24px;
}

.build-btn {
	display: flex;
	align-items: center;
	width: 120px;
	height: 36px;
	padding-left: 9px;
	background: #2b2e39;
	border-radius: 6px;
	font-size: 17px;
	color: #e4e5ea;
}

.build-btn span {
	margin-left: 7px;
}

.build-chev {
	margin-left: auto;
	margin-right: 10px;
}

.comp-ico {
	margin-left: 13px;
}

.comp-ico + .comp-ico {
	margin-left: 20px;
}

.comp-ico.comp-right {
	margin-left: auto;
}

.comp-ico.comp-send {
	margin-left: 30px;
	margin-right: 10px;
}

/* right side */
.work-area {
	display: flex;
	flex-direction: column;
	flex: 1;
	min-width: 0;
	padding-right: 10px;
}

.wtabs {
	display: flex;
	align-items: center;
	height: 42px;
	margin-top: 10px;
	font-size: 20.400px;
	color: #8e909a;
}

.wtab {
	display: flex;
	align-items: center;
	height: 42px;
	border-radius: 7px;
	white-space: nowrap;
}

.wtab span {
	margin-left: 10px;
	margin-bottom: 2px;
}

.wtab-x {
	color: #6e7079;
	margin-left: auto;
}

.wtab-git {
	width: 134px;
	margin-left: 9px;
}

.wtab-console {
	width: 132px;
	margin-left: 34px;
}

.wtab-console span, .wtab-secrets span {
	margin-left: 12px;
}

.wtab-on {
	width: 159px;
	margin-left: 22px;
	padding: 0 15px 0 10px;
	background: #242730;
	color: #f0f0f4;
}

.wtab-npm {
	width: 135px;
	margin-left: 16px;
}

.wtab-secrets {
	width: 131px;
	margin-left: 35px;
}

.wtab-plus {
	margin-left: 33px;
}

.wtabs-right {
	display: flex;
	align-items: center;
	margin-left: auto;
	padding-right: 11px;
	color: #f0f0f4;
}

.invite-ico {
	margin-left: 26px;
}

.publish {
	display: flex;
	height: 42px;
	margin-left: 15px;
	background: #242730;
	border-radius: 7px;
	font-size: 17.500px;
	font-weight: 500;
}

.publish-main {
	display: flex;
	align-items: center;
	gap: 8px;
	width: 131px;
	padding-left: 15px;
	border-right: 1px solid #1a1c25;
}

.publish-side {
	display: flex;
	align-items: center;
	justify-content: center;
	width: 33px;
}

.panel-ico {
	margin-left: 18px;
}

.pane {
	display: flex;
	flex-direction: column;
	flex: 1;
	min-height: 0;
	margin: 9px 0 10px -1px;
	border: 1px solid #333744;
	border-radius: 6px;
	overflow: hidden;
}

.pane-bar {
	display: flex;
	flex: none;
	align-items: center;
	height: 53px;
	padding-left: 15px;
}

.pane-fwd {
	margin-left: 25px;
}

.pane-reload {
	margin-left: 22px;
}

.pane-url {
	display: flex;
	align-items: center;
	width: 830px;
	height: 36px;
	margin-left: 13px;
	padding-left: 6px;
	background: #242730;
	border-radius: 6px;
}

.pane-host {
	margin-left: 4px;
	font-size: 19px;
	color: #a6a8b2;
}

.pane-host em {
	font-style: normal;
	color: #fff;
}

.pane-ico {
	margin-left: 19px;
}

.pane-devices {
	margin-left: 13px;
}

.pane-open {
	margin-left: 17px;
}

.pane-theme {
	margin-left: 12px;
	font-size: 20px;
	color: #9fb0c8;
}

.preview {
	display: flex;
	flex-direction: column;
	flex: 1;
	align-items: center;
	justify-content: center;
	padding-bottom: 5px;
	background: #000;
	font-family: Inter, sans-serif;
}

.preview h1 {
	font-size: 54px;
	font-weight: 700;
	line-height: 68px;
	color: #facc15;
}

.preview p {
	margin-top: 23px;
	font-size: 24px;
	line-height: 30px;
	color: #f5f5f5;
}

/* windows taskbar */
.taskbar {
	flex: 1;
	display: flex;
	align-items: center;
	padding-left: 444px;
	border-top: 1px solid #4a4644;
	background: linear-gradient(90deg, #2e1a10 0%, #3a1b1f 12%, #231f1e 26%, #1f1d1c 70%, #2a1a1a 85%, #2e1c20 100%);
}

.tb-search {
	display: flex;
	align-items: center;
	gap: 14px;
	width: 329px;
	height: 48px;
	margin-left: 20px;
	padding-left: 18px;
	background: #484341;
	border: 1px solid #5c5856;
	border-radius: 24px;
	font-size: 19px;
	color: #e8e8e8;
}

.tb-apps {
	display: flex;
	align-items: center;
	margin-left: 3px;
}

.tb-app {
	display: flex;
	align-items: center;
	justify-content: center;
	width: 66px;
	height: 60px;
}

.tb-t {
	fill: #fff;
	font-family: "Liberation Sans", sans-serif;
	font-weight: 700;
	text-anchor: middle;
}

.tb-slot, .tb-code {
	position: relative;
}

.tb-slot::before {
	content: "";
	position: absolute;
	top: 0;
	bottom: 0;
	left: 3px;
	right: 3px;
	border-radius: 6px;
}

.tb-slot svg {
	position: relative;
	margin-bottom: 4px;
}

.tb-slot-edge::before {
	background: #333331;
}

.tb-slot-nord::before {
	background: #7e4a50;
}

.tb-mark {
	position: absolute;
	bottom: 1px;
	height: 5px;
	border-radius: 3px;
}

.tb-mark-edge {
	width: 24px;
	background: #4fc3f7;
}

.tb-mark-nord {
	width: 48px;
	background: #ff9aa8;
}

.tb-dot {
	position: absolute;
	left: 28px;
	bottom: 1px;
	width: 9px;
	height: 5px;
	border-radius: 3px;
	background: #9a9a9a;
}

.tray {
	display: flex;
	align-items: center;
	margin-left: auto;
	padding-right: 29px;
}

.tray-badge {
	margin-left: 29px;
}

.tray-wifi {
	margin-left: 23px;
}

.tray-vol {
	margin-left: 10px;
}

.tray-bat {
	margin-left: 13px;
}

.tray-seven {
	fill: #fff;
	font-family: "Liberation Sans", sans-serif;
	font-weight: 700;
}

.clock {
	display: flex;
	flex-direction: column;
	align-items: flex-end;
	gap: 3px;
	margin-left: 25px;
	font-size: 17.500px;
	line-height: 22px;
}
```
